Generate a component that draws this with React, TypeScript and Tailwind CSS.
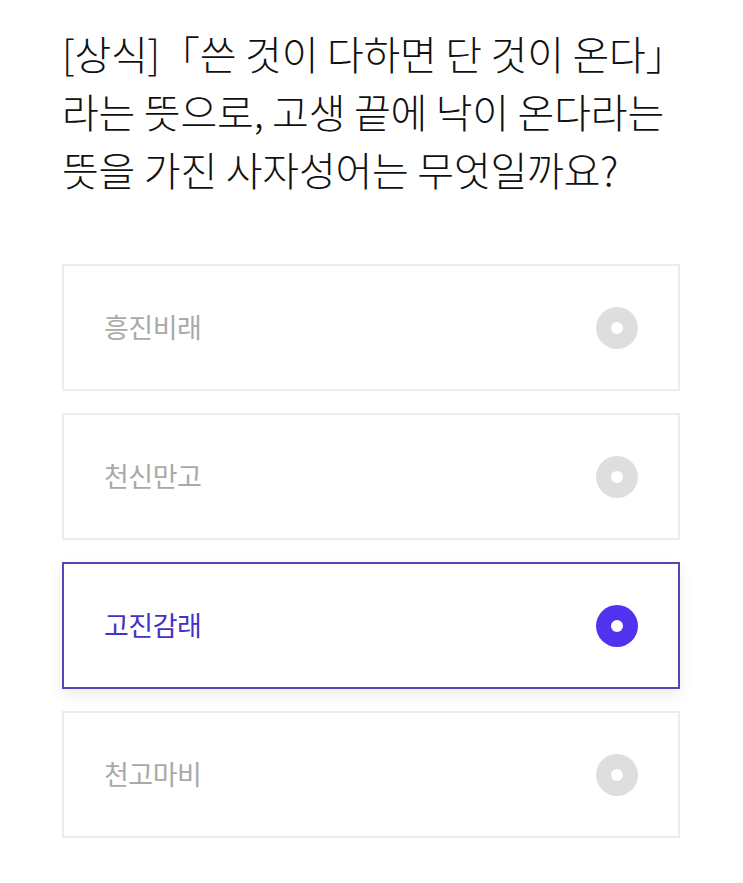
import React, { useState } from 'react';

const options = ['흥진비래', '천신만고', '고진감래', '천고마비'];

export default function App() {
  const [selected, setSelected] = useState(2);

  return (
    <div
      className="min-h-screen bg-white px-[62px] pt-[24px]"
      style={{ fontFamily: '"Noto Sans CJK KR", "Noto Sans", sans-serif' }}
    >
      <h1 className="text-[40px] leading-[58px] font-light text-[#111] tracking-[-0.2px] whitespace-nowrap">
        [상식]「쓴 것이 다하면 단 것이 온다」
        <br />
        라는 뜻으로, 고생 끝에 낙이 온다라는
        <br />
        뜻을 가진 사자성어는 무엇일까요?
      </h1>

      <div className="mt-[66px] flex flex-col gap-[22px] w-[618px]">
        {options.map((label, i) => {
          const active = i === selected;
          return (
            <button
              key={label}
              onClick={() => setSelected(i)}
              className={`h-[127px] flex items-center justify-between pl-[40px] pr-[40px] bg-white text-left ${
                active
                  ? 'border-2 border-[#5a43b8] shadow-[0_6px_14px_rgba(0,0,0,0.08)]'
                  : 'border-2 border-[#ececec]'
              }`}
            >
              <span
                className={`text-[27px] tracking-[-0.5px] font-normal ${
                  active ? 'text-[#4631c8]' : 'text-[#a9a9a9]'
                }`}
              >
                {label}
              </span>
              <span
                className={`w-[42px] h-[42px] rounded-full flex items-center justify-center ${
                  active ? 'bg-[#4f33ee]' : 'bg-[#dedede]'
                }`}
              >
                <span className="w-[12px] h-[12px] rounded-full bg-white" />
              </span>
            </button>
          );
        })}
      </div>
    </div>
  );
}
